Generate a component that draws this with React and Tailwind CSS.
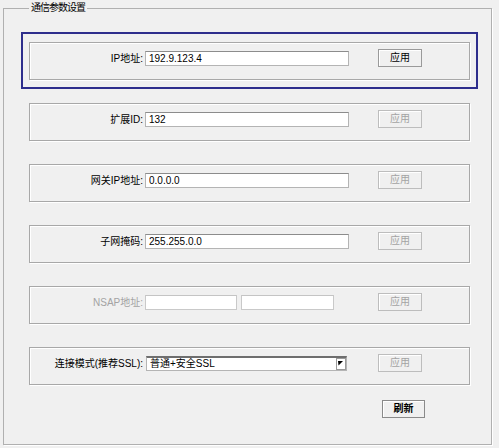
const font = { fontFamily: '"Liberation Sans", "Noto Sans CJK SC", sans-serif' };

const ApplyButton = ({ disabled }) => (
  <button
    type="button"
    disabled={disabled}
    className={`w-[44px] h-[18px] ml-[29px] border bg-[#f0f0f0] text-[10px] leading-[16px] shadow-[inset_1px_1px_0_#ffffff] ${
      disabled ? "border-[#bdbdbd] text-[#a3a3a3]" : "border-[#9a9a9a] text-black"
    }`}
  >
    应用
  </button>
);

const TextBox = ({ value, width = "w-[204px]", className = "" }) => (
  <input
    type="text"
    readOnly
    defaultValue={value}
    className={`${width} h-[15px] bg-white border border-[#b4b4b4] border-t-[#8c8c8c] px-[3px] text-[10px] leading-[13px] text-black outline-none ${className}`}
  />
);

const Row = ({ label, active, disabledLabel, children, disabled }) => (
  <div
    className={`w-[457px] h-[57px] border-2 px-[6px] pt-[8px] ${
      active ? "border-[#2e2e8c]" : "border-transparent"
    }`}
  >
    <div className="h-[38px] border border-[#a8a8a8] shadow-[1px_1px_0_#ffffff,inset_1px_1px_0_#ffffff] flex items-center pb-[6px]">
      <div
        className={`w-[113px] text-right text-[10px] leading-[13px] ${
          disabledLabel ? "text-[#a3a3a3]" : "text-black"
        }`}
      >
        {label}
      </div>
      <div className="ml-[2px] w-[204px] flex items-center">{children}</div>
      <ApplyButton disabled={disabled} />
    </div>
  </div>
);

export default function App() {
  return (
    <div className="w-[499px] h-[448px] bg-[#f0f0f0] pt-[2px] pl-[3px] pr-[7px] pb-[3px]" style={font}>
      <fieldset className="h-full border border-[#b0b0b0] shadow-[1px_1px_0_#ffffff] pl-[17px] pt-[18px]">
        <legend className="ml-[8px] px-[2px] text-[10px] leading-[12px] tracking-[-1px] text-black">
          通信参数设置
        </legend>
        <div className="flex flex-col gap-[4px]">
          <Row label="IP地址:" active>
            <TextBox value="192.9.123.4" />
          </Row>
          <Row label="扩展ID:" disabled>
            <TextBox value="132" />
          </Row>
          <Row label="网关IP地址:" disabled>
            <TextBox value="0.0.0.0" />
          </Row>
          <Row label="子网掩码:" disabled>
            <TextBox value="255.255.0.0" />
          </Row>
          <Row label="NSAP地址:" disabledLabel disabled>
            <TextBox value="" width="w-[92px]" className="border-t-[#c4c4c4] border-[#c9c9c9]" />
            <TextBox value="" width="w-[93px]" className="ml-[4px] border-t-[#c4c4c4] border-[#c9c9c9]" />
          </Row>
          <Row label="连接模式(推荐SSL):" disabled>
            <div className="ml-[1px] w-[201px] h-[15px] bg-white border border-[#b4b4b4] border-t-[#6e6e6e] border-t-2 flex items-stretch">
              <div className="flex-1 px-[3px] text-[10px] leading-[12px] text-black">普通+安全SSL</div>
              <div className="w-[10px] border border-[#9a9a9a] bg-white flex items-start justify-start pl-[1px] pt-[2px]">
                <svg width="5" height="5" viewBox="0 0 5 5">
                  <polygon points="0,0 5,0 0.5,4.5" fill="#000" />
                </svg>
              </div>
            </div>
          </Row>
        </div>
        <button
          type="button"
          className="mt-[6px] ml-[361px] w-[43px] h-[18px] border border-[#8a8a8a] bg-[#f0f0f0] text-[10px] leading-[16px] font-bold text-black shadow-[inset_1px_1px_0_#ffffff]"
        >
          刷新
        </button>
      </fieldset>
    </div>
  );
}
